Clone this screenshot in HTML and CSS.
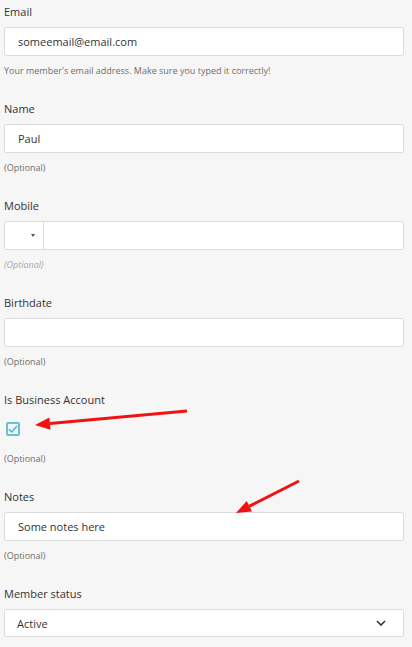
FILE: index.html
```html
<!DOCTYPE html>
<html lang="en">
  <head>
    <meta charset="UTF-8" />
    <meta name="viewport" content="width=device-width, initial-scale=1.0" />
    <title>Edit Member</title>
    <link rel="stylesheet" href="styles.css">
  </head>
  <body>
    <form class="member-form">
      <div class="field">
        <label class="field-label">Email</label>
        <input class="text-input" type="text" value="someemail@email.com" />
        <div class="help">Your member's email address. Make sure you typed it correctly!</div>
      </div>

      <div class="field">
        <label class="field-label">Name</label>
        <input class="text-input" type="text" value="Paul" />
        <div class="help">(Optional)</div>
      </div>

      <div class="field">
        <label class="field-label">Mobile</label>
        <div class="phone">
          <div class="phone-code"><span class="caret"></span></div>
          <input class="phone-number" type="text" value="" />
        </div>
        <div class="help help-italic">(Optional)</div>
      </div>

      <div class="field">
        <label class="field-label">Birthdate</label>
        <input class="text-input" type="text" value="" />
        <div class="help">(Optional)</div>
      </div>

      <div class="field">
        <label class="field-label">Is Business Account</label>
        <div class="check-row">
          <span class="checkbox">
            <svg width="10" height="8" viewBox="0 0 10 8">
              <path d="M1 4.2 L3.8 7 L9 1" fill="none" stroke="#4fb3c6" stroke-width="1.4" />
            </svg>
          </span>
        </div>
        <div class="help">(Optional)</div>
      </div>

      <div class="field">
        <label class="field-label">Notes</label>
        <input class="text-input" type="text" value="Some notes here" />
        <div class="help">(Optional)</div>
      </div>

      <div class="field">
        <label class="field-label">Member status</label>
        <div class="select">
          <span>Active</span>
          <svg width="10" height="6" viewBox="0 0 10 6">
            <path d="M1 1 L5 5 L9 1" fill="none" stroke="#333" stroke-width="1.6" />
          </svg>
        </div>
      </div>
    </form>

    <!-- red annotation arrows drawn over the form -->
    <svg class="annotations" width="412" height="647" viewBox="0 0 412 647">
      <line x1="187" y1="411" x2="50" y2="423.6" stroke="#f01212" stroke-width="3" />
      <polygon points="35,425 50.5,429.8 49.3,417.4" fill="#f01212" />
      <line x1="299" y1="481" x2="249.4" y2="506.2" stroke="#f01212" stroke-width="3" />
      <polygon points="236,513 252.1,511.5 246.7,500.9" fill="#f01212" />
    </svg>
  </body>
</html>
```

FILE: styles.css
```css
body {
  margin: 0;
  background: #f6f6f6;
  font-family: "Open Sans", "Noto Sans", Arial, sans-serif;
  color: #333;
  position: relative;
}
.member-form {
  padding: 3px 8px 0 4px;
}
.field {
  padding-bottom: 21px;
}
.field-label {
  display: block;
  font-size: 11px;
  line-height: 18px;
  margin-bottom: 6px;
  color: #333;
}
.text-input {
  display: block;
  box-sizing: border-box;
  width: 100%;
  height: 29px;
  margin: 0;
  padding: 0 13px;
  border: 1px solid #dcdcdc;
  border-radius: 2px;
  background: #fff;
  font-family: inherit;
  font-size: 11px;
  color: #333;
}
.help {
  margin-top: 7px;
  font-size: 9px;
  line-height: 16px;
  color: #6f6f6f;
}
.help-italic {
  font-style: italic;
  color: #a6a6a6;
}
.phone {
  display: flex;
  height: 29px;
  box-sizing: border-box;
  border: 1px solid #dcdcdc;
  border-radius: 2px;
  background: #fff;
}
.phone-code {
  width: 39px;
  border-right: 1px solid #dcdcdc;
  display: flex;
  align-items: center;
  justify-content: flex-end;
  padding-right: 8px;
  box-sizing: border-box;
}
.caret {
  width: 0;
  height: 0;
  border-left: 2.5px solid transparent;
  border-right: 2.5px solid transparent;
  border-top: 3px solid #555;
}
.phone-number {
  flex: 1;
  border: none;
  margin: 0;
  padding: 0 10px;
  background: transparent;
}
.check-row {
  height: 29px;
  display: flex;
  align-items: flex-start;
  padding-top: 7px;
  padding-left: 2px;
  box-sizing: border-box;
}
.checkbox {
  width: 14px;
  height: 14px;
  box-sizing: border-box;
  border: 2px solid #6cc0cf;
  border-radius: 2px;
  background: #eef7f9;
  display: flex;
  align-items: center;
  justify-content: center;
}
.select {
  box-sizing: border-box;
  height: 28px;
  display: flex;
  align-items: center;
  justify-content: space-between;
  padding: 0 17px 0 12px;
  border: 1px solid #dcdcdc;
  border-radius: 2px;
  background: #fff;
  font-size: 11px;
  color: #333;
}
.annotations {
  position: absolute;
  top: 0;
  left: 0;
  pointer-events: none;
}
```
